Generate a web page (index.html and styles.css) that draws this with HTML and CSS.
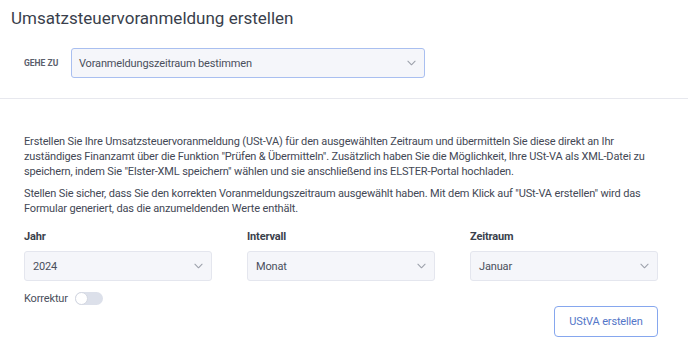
FILE: index.html
```html
<!DOCTYPE html>
<html lang="de">
<head>
<meta charset="utf-8">
<title>Umsatzsteuervoranmeldung erstellen</title>
<link rel="stylesheet" href="styles.css">
</head>
<body>
<header class="page-head">
  <h1 class="page-title">Umsatzsteuervoranmeldung erstellen</h1>
  <div class="goto">
    <span class="goto-label">Gehe zu</span>
    <div class="select select-goto">
      <span class="select-value">Voranmeldungszeitraum bestimmen</span>
      <svg class="chev" viewBox="0 0 10 6" width="10" height="6"><path d="M1 1l4 4 4-4" fill="none" stroke="currentColor" stroke-width="1.2" stroke-linecap="round" stroke-linejoin="round"/></svg>
    </div>
  </div>
</header>
<main class="content">
  <p class="text">Erstellen Sie Ihre Umsatzsteuervoranmeldung (USt-VA) für den ausgewählten Zeitraum und übermitteln Sie diese direkt an Ihr zuständiges Finanzamt über die Funktion "Prüfen &amp; Übermitteln". Zusätzlich haben Sie die Möglichkeit, Ihre USt-VA als XML-Datei zu speichern, indem Sie "Elster-XML speichern" wählen und sie anschließend ins ELSTER-Portal hochladen.</p>
  <p class="text">Stellen Sie sicher, dass Sie den korrekten Voranmeldungszeitraum ausgewählt haben. Mit dem Klick auf "USt-VA erstellen" wird das Formular generiert, das die anzumeldenden Werte enthält.</p>
  <div class="fields">
    <div class="field">
      <label class="field-label">Jahr</label>
      <div class="select">
        <span class="select-value">2024</span>
        <svg class="chev" viewBox="0 0 10 6" width="10" height="6"><path d="M1 1l4 4 4-4" fill="none" stroke="currentColor" stroke-width="1.2" stroke-linecap="round" stroke-linejoin="round"/></svg>
      </div>
    </div>
    <div class="field">
      <label class="field-label">Intervall</label>
      <div class="select">
        <span class="select-value">Monat</span>
        <svg class="chev" viewBox="0 0 10 6" width="10" height="6"><path d="M1 1l4 4 4-4" fill="none" stroke="currentColor" stroke-width="1.2" stroke-linecap="round" stroke-linejoin="round"/></svg>
      </div>
    </div>
    <div class="field">
      <label class="field-label">Zeitraum</label>
      <div class="select">
        <span class="select-value">Januar</span>
        <svg class="chev" viewBox="0 0 10 6" width="10" height="6"><path d="M1 1l4 4 4-4" fill="none" stroke="currentColor" stroke-width="1.2" stroke-linecap="round" stroke-linejoin="round"/></svg>
      </div>
    </div>
  </div>
  <div class="toggle-row">
    <span class="toggle-label">Korrektur</span>
    <span class="toggle"><span class="knob"></span></span>
  </div>
  <div class="actions">
    <button class="btn">UStVA erstellen</button>
  </div>
</main>
</body>
</html>
```
FILE: styles.css
```css
* { box-sizing: border-box; }
html, body { margin: 0; padding: 0; background: #fff; }
body {
  font-family: "Roboto", "Noto Sans", sans-serif;
  color: #434855;
  width: 688px;
  overflow: hidden;
  letter-spacing: -0.15px;
}
.page-head {
  border-bottom: 1px solid #e7e8ee;
  padding: 6px 0 20px 0;
}
.page-title {
  margin: 0 0 0 11px;
  font-weight: 400;
  font-size: 17px;
  line-height: 24px;
  color: #3a3f4c;
  letter-spacing: 0;
}
.goto {
  display: flex;
  align-items: center;
  margin-top: 18px;
  padding-left: 24px;
}
.goto-label {
  font-size: 8.5px;
  font-weight: 700;
  text-transform: uppercase;
  color: #5b606c;
  width: 47px;
  letter-spacing: 0;
}
.select {
  display: flex;
  align-items: center;
  justify-content: space-between;
  height: 30px;
  padding: 0 8px 0 8px;
  background: #f5f6fa;
  border: 1px solid #e4e6ee;
  border-radius: 3px;
  font-size: 11px;
  color: #4a4f5c;
}
.select-goto {
  width: 354px;
  border-color: #a9bff0;
  padding-left: 7px;
}
.chev { color: #9da1ab; width: 9px; height: 6px; }
.content {
  padding: 35px 30px 0 24px;
}
.text {
  margin: 0 0 7px 0;
  font-size: 11px;
  line-height: 15px;
  color: #434855;
}
.fields {
  display: grid;
  grid-template-columns: repeat(3, 188px);
  column-gap: 35px;
  margin-top: 13px;
}
.field-label {
  display: block;
  font-size: 11px;
  font-weight: 700;
  line-height: 15px;
  margin-bottom: 7px;
  color: #3a3f4c;
}
.toggle-row {
  display: flex;
  align-items: center;
  gap: 7px;
  margin-top: 10px;
  height: 15px;
}
.toggle-label { font-size: 11px; color: #4a4f5c; }
.toggle {
  position: relative;
  width: 28px;
  height: 13px;
  border-radius: 7px;
  background: #dce0ea;
}
.knob {
  position: absolute;
  left: 0;
  top: 0;
  width: 13px;
  height: 13px;
  border-radius: 50%;
  background: #fff;
  border: 1px solid #d3d7e1;
}
.actions {
  display: flex;
  justify-content: flex-end;
}
.btn {
  width: 104px;
  height: 31px;
  border: 1px solid #86a7ee;
  border-radius: 4px;
  background: #fff;
  color: #5476c8;
  font-family: inherit;
  font-size: 11px;
  letter-spacing: -0.15px;
  padding: 0;
}
```
